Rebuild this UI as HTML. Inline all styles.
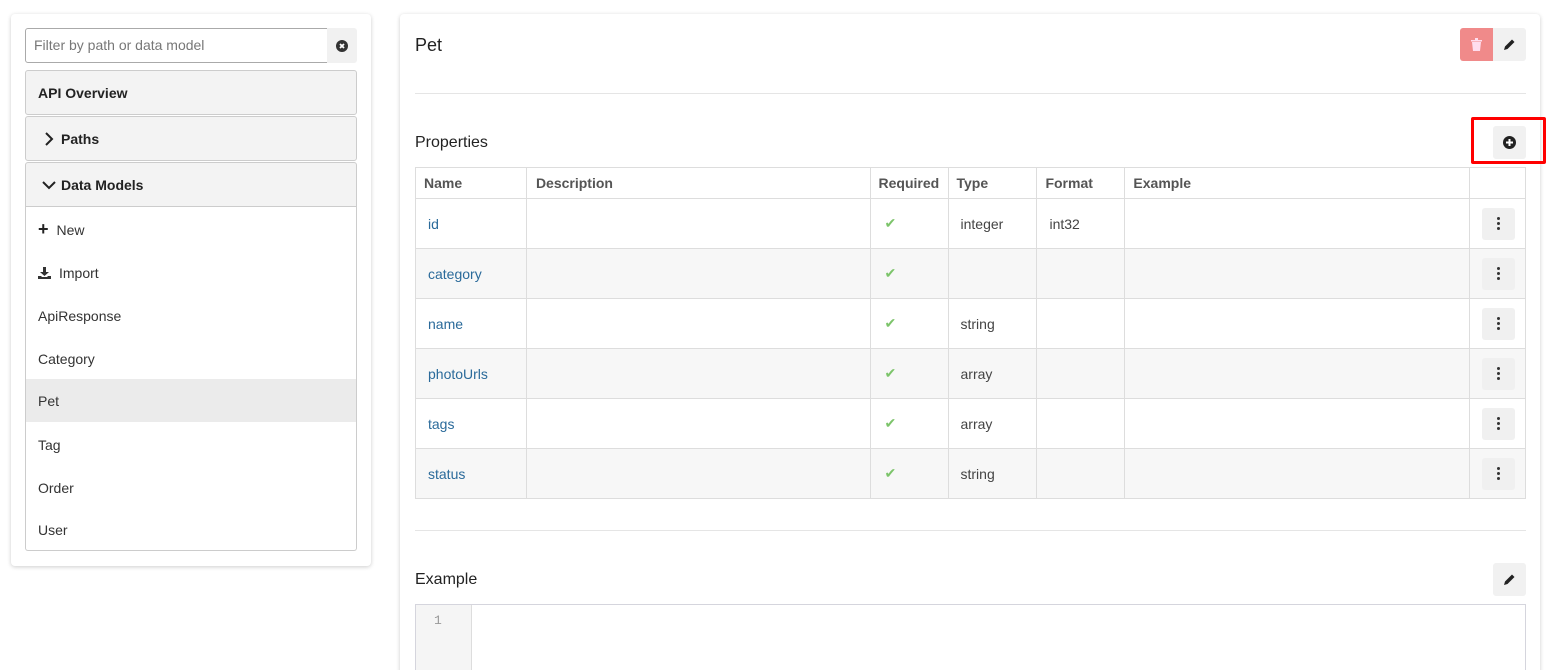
<!DOCTYPE html>
<html><head><style>
*{box-sizing:border-box;margin:0;padding:0}
html,body{width:1553px;height:670px;overflow:hidden}
body{background:#fff;font-family:"Liberation Sans",sans-serif;font-size:14px;color:#333;position:relative}
.abs{position:absolute}
.panel{background:#fff;border-radius:4px;box-shadow:0 1px 4px rgba(0,0,0,.2)}
.hd{position:absolute;left:25px;width:332px;background:#f3f3f3;border:1px solid #ccc;border-radius:3px;font-weight:bold;font-size:14px;color:#222;padding-left:12px;display:flex;align-items:center}
.li{position:absolute;left:26px;width:330px;height:43px;padding-left:12px;display:flex;align-items:center;font-size:14px;color:#333}
table{position:absolute;left:415px;top:167px;width:1111px;border-collapse:collapse}
td,th{border:1px solid #ddd;padding:0 8px;text-align:left;font-size:14px}
th{height:31px;font-weight:bold;color:#555}
td{height:50px;color:#444}
tr:nth-child(odd) td{background:#f7f7f7}
td.n{color:#2a6a9a;padding-left:12px}
.ck{color:#7cc46a;font-size:14px;padding-left:14px}
.dots{width:33px;height:32px;background:#f0f0f0;border-radius:3px;margin-left:4px;display:flex;flex-direction:column;align-items:center;justify-content:center;gap:2px}
.dots i{width:3px;height:3px;background:#333;border-radius:50%;display:block}
.btn{position:absolute;background:#f1f1f1;border-radius:3px;display:flex;align-items:center;justify-content:center}
</style></head><body>
<div class="abs panel" style="left:11px;top:14px;width:360px;height:552px"></div>
<div class="abs" style="left:25px;top:28px;width:303px;height:35px;border:1px solid #aaa;border-radius:3px 0 0 3px;padding-left:8px;line-height:33px;color:#777;font-size:14px">Filter by path or data model</div>
<div class="btn" style="left:327px;top:28px;width:30px;height:35px;border-radius:0 3px 3px 0"><svg width="12" height="12" viewBox="0 0 12 12"><circle cx="6" cy="6" r="6" fill="#333"/><path d="M4 4L8 8M8 4L4 8" stroke="#fff" stroke-width="1.8"/></svg></div>
<div class="hd" style="top:70px;height:45px">API Overview</div>
<div class="hd" style="top:116px;height:45px"><svg width="10" height="14" viewBox="0 0 10 14" style="margin:0 7px 0 6px"><path d="M2 1L8 7L2 13" stroke="#222" stroke-width="2" fill="none"/></svg>Paths</div>
<div class="hd" style="top:162px;height:45px;border-radius:3px 3px 0 0"><svg width="14" height="10" viewBox="0 0 14 10" style="margin:0 5px 0 4px"><path d="M1 2L7 8L13 2" stroke="#222" stroke-width="2" fill="none"/></svg>Data Models</div>
<div class="abs" style="left:25px;top:206px;width:332px;height:345px;border:1px solid #ccc;border-top:none;border-radius:0 0 3px 3px"></div>
<div class="li" style="top:208px"><b style="font-size:18px;margin-right:8px;color:#222">+</b>New</div>
<div class="li" style="top:251px"><svg width="13" height="12" viewBox="0 0 13 12" style="margin-right:8px"><path d="M5 0h3v5h3l-4.5 4L2 5h3z M0 9h3l1 1h5l1-1h3v3H0z" fill="#333"/></svg>Import</div>
<div class="li" style="top:294px">ApiResponse</div>
<div class="li" style="top:337px">Category</div>
<div class="li" style="top:379px;background:#ebebeb">Pet</div>
<div class="li" style="top:423px">Tag</div>
<div class="li" style="top:466px">Order</div>
<div class="li" style="top:508px">User</div>

<div class="abs panel" style="left:400px;top:14px;width:1140px;height:670px"></div>
<div class="abs" style="left:415px;top:35px;font-size:18px;color:#222">Pet</div>
<div class="btn" style="left:1460px;top:28px;width:33px;height:33px;background:#f08a8a;border-radius:3px 0 0 3px"><svg width="11" height="13" viewBox="0 0 11 13"><path d="M0 2h11v1.5H0zM4 0h3v2H4zM1 4h9l-1 9H2z" fill="#fde"/></svg></div>
<div class="btn" style="left:1493px;top:28px;width:33px;height:33px;border-radius:0 3px 3px 0"><svg width="11" height="11" viewBox="0 0 11 11"><path d="M0 11l1-3.5L8 .5l2.5 2.5-7 7z" fill="#222"/></svg></div>
<div class="abs" style="left:415px;top:93px;width:1111px;height:1px;background:#e5e5e5"></div>
<div class="abs" style="left:415px;top:134px;font-size:16px;color:#222">Properties</div>
<div class="btn" style="left:1493px;top:126px;width:33px;height:33px"><svg width="13" height="13" viewBox="0 0 13 13"><circle cx="6.5" cy="6.5" r="6.5" fill="#222"/><path d="M6.5 3v7M3 6.5h7" stroke="#fff" stroke-width="2"/></svg></div>
<div class="abs" style="left:1471px;top:117px;width:75px;height:47px;border:3px solid #f00;border-radius:2px"></div>
<table>
<colgroup><col style="width:111px"><col style="width:344px"><col style="width:78px"><col style="width:89px"><col style="width:88px"><col style="width:345px"><col style="width:56px"></colgroup>
<tr><th>Name</th><th style="padding-left:9px">Description</th><th>Required</th><th>Type</th><th>Format</th><th>Example</th><th></th></tr>
<tr><td class="n">id</td><td></td><td class="ck">✔</td><td style="padding-left:12px">integer</td><td style="padding-left:12px">int32</td><td></td><td><div class="dots"><i></i><i></i><i></i></div></td></tr>
<tr><td class="n">category</td><td></td><td class="ck">✔</td><td></td><td></td><td></td><td><div class="dots"><i></i><i></i><i></i></div></td></tr>
<tr><td class="n">name</td><td></td><td class="ck">✔</td><td style="padding-left:12px">string</td><td></td><td></td><td><div class="dots"><i></i><i></i><i></i></div></td></tr>
<tr><td class="n">photoUrls</td><td></td><td class="ck">✔</td><td style="padding-left:12px">array</td><td></td><td></td><td><div class="dots"><i></i><i></i><i></i></div></td></tr>
<tr><td class="n">tags</td><td></td><td class="ck">✔</td><td style="padding-left:12px">array</td><td></td><td></td><td><div class="dots"><i></i><i></i><i></i></div></td></tr>
<tr><td class="n">status</td><td></td><td class="ck">✔</td><td style="padding-left:12px">string</td><td></td><td></td><td><div class="dots"><i></i><i></i><i></i></div></td></tr>
</table>
<div class="abs" style="left:415px;top:530px;width:1111px;height:1px;background:#e5e5e5"></div>
<div class="abs" style="left:415px;top:571px;font-size:16px;color:#222">Example</div>
<div class="btn" style="left:1493px;top:563px;width:33px;height:33px"><svg width="11" height="11" viewBox="0 0 11 11"><path d="M0 11l1-3.5L8 .5l2.5 2.5-7 7z" fill="#222"/></svg></div>
<div class="abs" style="left:415px;top:604px;width:1111px;height:70px;border:1px solid #d5d5dd"></div>
<div class="abs" style="left:416px;top:605px;width:56px;height:70px;background:#f5f5f5;border-right:1px solid #ddd;color:#999;font-family:'Liberation Mono',monospace;font-size:13px;padding:8px 0 0 18px">1</div>
</body></html>
